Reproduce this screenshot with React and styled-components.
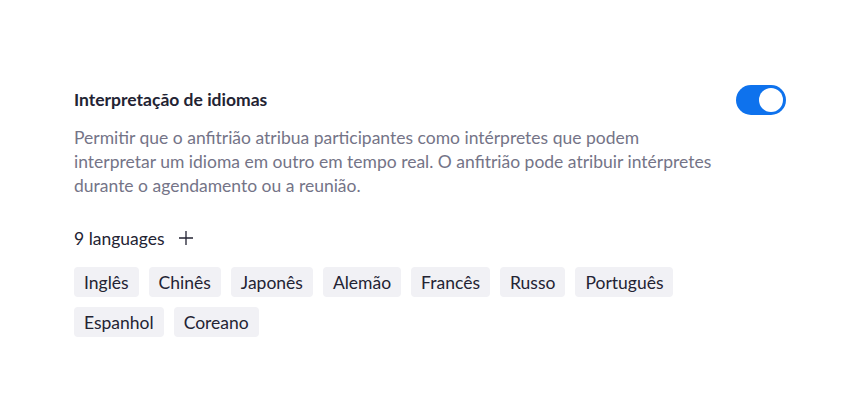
import React, { useState } from "react";
import styled, { createGlobalStyle } from "styled-components";

const Global = createGlobalStyle`
  html, body { margin: 0; padding: 0; background: #fff; }
  body { font-family: Lato, "Noto Sans", sans-serif; -webkit-font-smoothing: antialiased; }
`;

const Page = styled.div`
  padding: 88px 78px 0 74px;
  width: 864px;
  box-sizing: border-box;
`;

const Header = styled.div`
  display: flex;
  align-items: center;
  justify-content: space-between;
  height: 24px;
`;

const Title = styled.h3`
  margin: 0;
  font-size: 17.5px;
  line-height: 24px;
  font-weight: 700;
  color: #232333;
`;

const Switch = styled.button`
  position: relative;
  width: 50px;
  height: 30px;
  border: none;
  padding: 0;
  border-radius: 15px;
  background: ${(p) => (p.$on ? "#0e72ed" : "#babacc")};
  cursor: pointer;
  flex: none;
  &::after {
    content: "";
    position: absolute;
    top: 3px;
    left: ${(p) => (p.$on ? "23px" : "3px")};
    width: 24px;
    height: 24px;
    border-radius: 50%;
    background: #fff;
  }
`;

const Description = styled.p`
  margin: 14px 0 0;
  max-width: 648px;
  font-size: 17.5px;
  line-height: 24px;
  color: #747487;
`;

const CountRow = styled.div`
  display: flex;
  align-items: center;
  gap: 13px;
  margin-top: 28px;
  height: 24px;
  font-size: 17.5px;
  color: #232333;
`;

const AddButton = styled.button`
  border: none;
  background: none;
  padding: 0;
  width: 16px;
  height: 16px;
  display: flex;
  align-items: center;
  justify-content: center;
  cursor: pointer;
  color: #232333;
`;

const TagList = styled.div`
  display: flex;
  flex-wrap: wrap;
  gap: 10px;
  margin-top: 17px;
  max-width: 640px;
`;

const Tag = styled.span`
  display: inline-flex;
  align-items: center;
  height: 30px;
  padding: 0 10px;
  border-radius: 4px;
  background: #f1f1f5;
  font-size: 17.5px;
  color: #232333;
`;

const languages = [
  "Inglês",
  "Chinês",
  "Japonês",
  "Alemão",
  "Francês",
  "Russo",
  "Português",
  "Espanhol",
  "Coreano",
];

export default function App() {
  const [on, setOn] = useState(true);
  return (
    <>
      <Global />
      <Page>
        <Header>
          <Title>Interpretação de idiomas</Title>
          <Switch $on={on} onClick={() => setOn(!on)} aria-label="toggle" />
        </Header>
        <Description>
          Permitir que o anfitrião atribua participantes como intérpretes que podem
          interpretar um idioma em outro em tempo real. O anfitrião pode atribuir intérpretes
          durante o agendamento ou a reunião.
        </Description>
        <CountRow>
          <span>9 languages</span>
          <AddButton aria-label="add">
            <svg width="14" height="14" viewBox="0 0 14 14">
              <path d="M7 0v14M0 7h14" stroke="currentColor" strokeWidth="1.3" />
            </svg>
          </AddButton>
        </CountRow>
        <TagList>
          {languages.map((l) => (
            <Tag key={l}>{l}</Tag>
          ))}
        </TagList>
      </Page>
    </>
  );
}
